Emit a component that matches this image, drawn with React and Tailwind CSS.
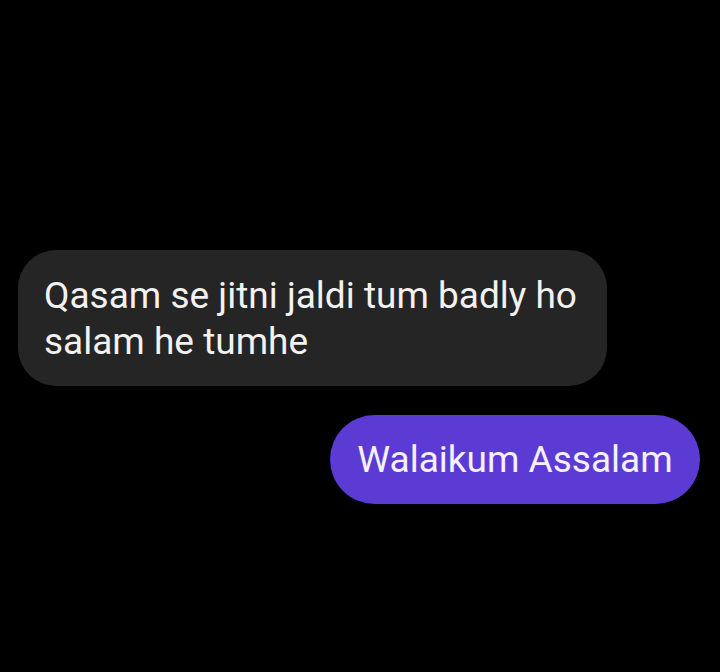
export default function App() {
  return (
    <div className="w-[720px] h-[672px] bg-black flex flex-col" style={{ fontFamily: "Roboto, 'Noto Sans', sans-serif" }}>
      <div className="pt-[250px] pl-[18px]">
        <div className="w-[589px] h-[136px] bg-[#252525] rounded-[38px] pl-[26px] pt-[23px] text-[37px] leading-[46px] text-[#f2f2f2]">
          Qasam se jitni jaldi tum badly ho<br />salam he tumhe
        </div>
      </div>
      <div className="pt-[29px] pl-[330px]">
        <div className="w-[370px] h-[89px] bg-[#5c3bd5] rounded-full flex items-center justify-center text-[37px] text-[#f5f0ff]">
          Walaikum Assalam
        </div>
      </div>
    </div>
  );
}
